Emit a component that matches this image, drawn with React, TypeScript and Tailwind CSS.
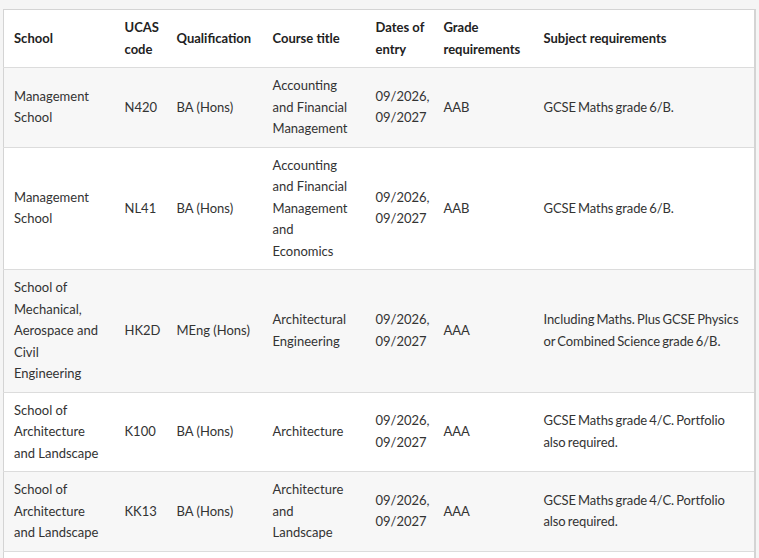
import React from "react";

type Row = {
  school: string;
  code: string;
  qual: string;
  title: string;
  grade: string;
  subject: string;
};

const rows: Row[] = [
  { school: "Management School", code: "N420", qual: "BA (Hons)", title: "Accounting and Financial Management", grade: "AAB", subject: "GCSE Maths grade 6/B." },
  { school: "Management School", code: "NL41", qual: "BA (Hons)", title: "Accounting and Financial Management and Economics", grade: "AAB", subject: "GCSE Maths grade 6/B." },
  { school: "School of Mechanical, Aerospace and Civil Engineering", code: "HK2D", qual: "MEng (Hons)", title: "Architectural Engineering", grade: "AAA", subject: "Including Maths. Plus GCSE Physics or Combined Science grade 6/B." },
  { school: "School of Architecture and Landscape", code: "K100", qual: "BA (Hons)", title: "Architecture", grade: "AAA", subject: "GCSE Maths grade 4/C. Portfolio also required." },
  { school: "School of Architecture and Landscape", code: "KK13", qual: "BA (Hons)", title: "Architecture and Landscape", grade: "AAA", subject: "GCSE Maths grade 4/C. Portfolio also required." },
  { school: "School of Biosciences", code: "C100", qual: "BSc (Hons)", title: "Biology", grade: "AAB", subject: "GCSE Maths grade 4/C." },
];

export default function App() {
  return (
    <div
      className="min-h-[558px] bg-[#f5f5f5] pt-[9px] pl-[3px] pr-[3px]"
      style={{ fontFamily: "Lato, 'Noto Sans', sans-serif" }}
    >
      <table className="table-fixed w-[753px] border-collapse bg-white border border-[#d4d4d4] border-r-2 text-[13px] leading-[21.5px] text-[#333]">
        <colgroup>
          <col className="w-[111px]" />
          <col className="w-[52px]" />
          <col className="w-[96px]" />
          <col className="w-[103px]" />
          <col className="w-[68px]" />
          <col className="w-[100px]" />
          <col />
        </colgroup>
        <thead>
          <tr className="bg-white border-b border-[#dcdcdc]">
            {["School", "UCAS code", "Qualification", "Course title", "Dates of entry", "Grade requirements", "Subject requirements"].map((h) => (
              <th key={h} className="text-left align-middle font-bold text-[#222] pl-[10px] pr-[0px] py-[7px]">
                {h}
              </th>
            ))}
          </tr>
        </thead>
        <tbody>
          {rows.map((r, i) => (
            <tr key={i} className={(i % 2 === 0 ? "bg-[#f7f7f7]" : "bg-white") + " border-b border-[#dcdcdc]"}>
              <td className="align-middle pl-[10px] pr-[10px] py-[7px]">{r.school}</td>
              <td className="align-middle pl-[10px] py-[7px]">{r.code}</td>
              <td className="align-middle pl-[10px] py-[7px]">{r.qual}</td>
              <td className="align-middle pl-[10px] pr-[14px] py-[7px]">{r.title}</td>
              <td className="align-middle pl-[10px] pr-[8px] py-[7px]">09/2026, 09/2027</td>
              <td className="align-middle pl-[10px] py-[7px]">{r.grade}</td>
              <td className="align-middle pl-[10px] pr-[10px] py-[7px] tracking-[-0.1px] [word-spacing:-1px]">{r.subject}</td>
            </tr>
          ))}
        </tbody>
      </table>
    </div>
  );
}
